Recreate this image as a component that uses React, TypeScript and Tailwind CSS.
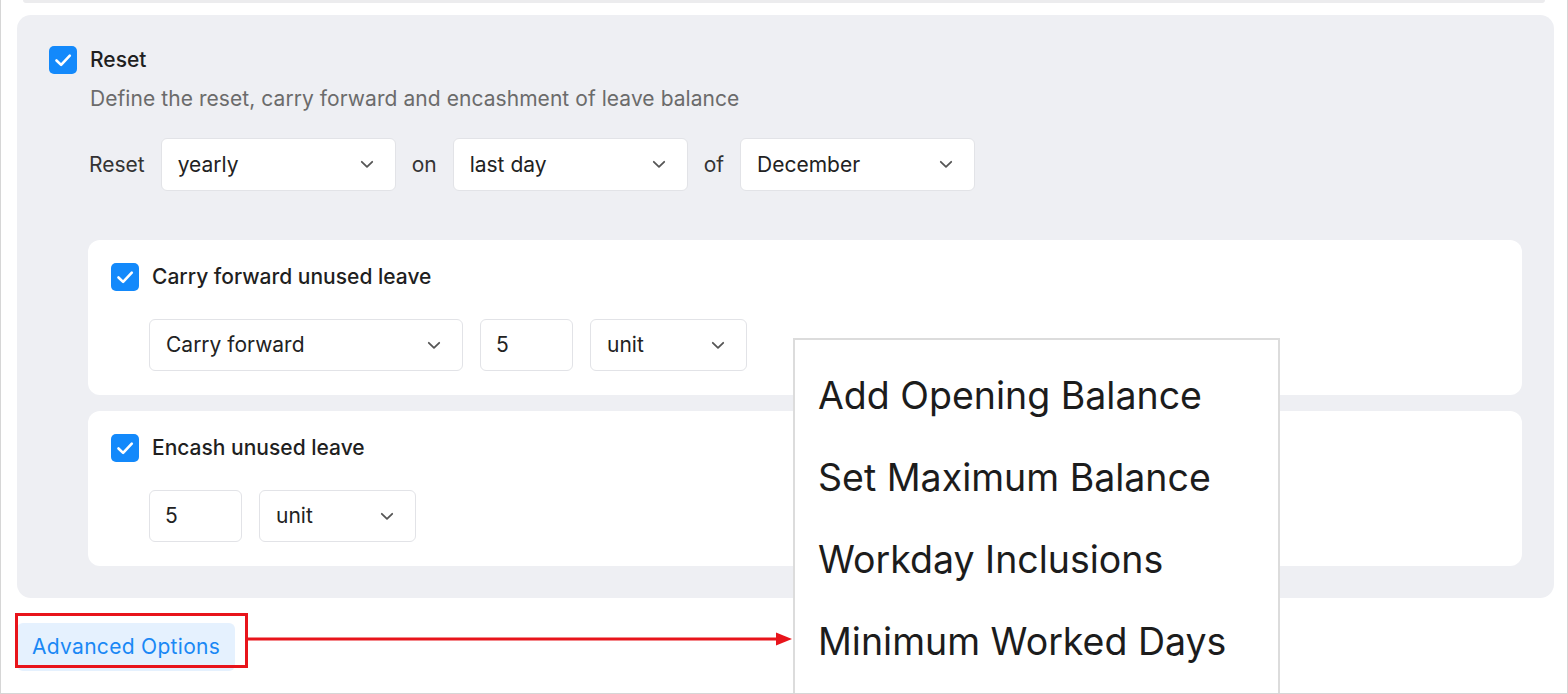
import React from 'react';

const font = { fontFamily: 'Inter, "Noto Sans", sans-serif' };

const Check = () => (
  <span className="flex h-[28px] w-[28px] shrink-0 items-center justify-center rounded-[5px] bg-[#1389fb]">
    <svg width="28" height="28" viewBox="0 0 28 28" fill="none">
      <path
        d="M7.5 14.5l4.6 4.4L20.8 9.6"
        stroke="white"
        strokeWidth="2.6"
        strokeLinecap="round"
        strokeLinejoin="round"
      />
    </svg>
  </span>
);

const Chevron = () => (
  <svg width="14" height="9" viewBox="0 0 14 9" fill="none">
    <path
      d="M1.8 1.8L7 6.8l5.2-5"
      stroke="#555"
      strokeWidth="1.8"
      strokeLinecap="round"
      strokeLinejoin="round"
    />
  </svg>
);

const Select = ({ value, width, height = 'h-[53px]' }: { value: string; width: string; height?: string }) => (
  <div
    className={`flex ${height} ${width} items-center justify-between rounded-[6px] border border-[#e2e3e7] bg-white pl-[16px] pr-[21px] text-[21px] text-[#222]`}
  >
    <span>{value}</span>
    <Chevron />
  </div>
);

const NumberBox = ({ value, width }: { value: string; width: string }) => (
  <div
    className={`flex h-[52px] ${width} items-center rounded-[6px] border border-[#e2e3e7] bg-white pl-[15px] text-[21px] text-[#222]`}
  >
    {value}
  </div>
);

const menuItems = [
  'Add Opening Balance',
  'Set Maximum Balance',
  'Workday Inclusions',
  'Minimum Worked Days',
];

export default function App() {
  return (
    <div
      style={font}
      className="relative h-[694px] w-[1568px] overflow-hidden border-x border-b border-[#d6d6d6] bg-white leading-[28px]"
    >
      <div className="mx-[22px] h-[3px] rounded-b-full bg-[#ececee]" />

      <div className="ml-[16px] mr-[13px] mt-[12px] rounded-[14px] bg-[#eeeff3] px-[32px] pb-[32px] pt-[31px]">
        <div className="flex items-center gap-[13px]">
          <Check />
          <span className="text-[21px] font-medium text-[#1f1f1f]">Reset</span>
        </div>
        <p className="ml-[41px] mt-[11px] text-[21px] tracking-[0.06px] text-[#6b6b6b]">
          Define the reset, carry forward and encashment of leave balance
        </p>

        <div className="ml-[40px] mt-[25px] flex items-center gap-[16px] text-[21px] text-[#333]">
          <span>Reset</span>
          <Select value="yearly" width="w-[235px]" />
          <span>on</span>
          <Select value="last day" width="w-[235px]" />
          <span>of</span>
          <Select value="December" width="w-[235px]" />
        </div>

        <div className="ml-[39px] mt-[49px] flex flex-col gap-[16px]">
          <div className="rounded-[12px] bg-white pb-[24px] pl-[23px] pt-[23px]">
            <div className="flex items-center gap-[13px]">
              <Check />
              <span className="text-[21px] font-medium text-[#1f1f1f]">
                Carry forward unused leave
              </span>
            </div>
            <div className="ml-[38px] mt-[28px] flex items-center gap-[17px]">
              <Select value="Carry forward" width="w-[314px]" height="h-[52px]" />
              <NumberBox value="5" width="w-[93px]" />
              <Select value="unit" width="w-[157px]" height="h-[52px]" />
            </div>
          </div>

          <div className="rounded-[12px] bg-white pb-[24px] pl-[23px] pt-[23px]">
            <div className="flex items-center gap-[13px]">
              <Check />
              <span className="text-[21px] font-medium text-[#1f1f1f]">
                Encash unused leave
              </span>
            </div>
            <div className="ml-[38px] mt-[28px] flex items-center gap-[17px]">
              <NumberBox value="5" width="w-[93px]" />
              <Select value="unit" width="w-[157px]" height="h-[52px]" />
            </div>
          </div>
        </div>
      </div>

      <div className="ml-[16px] mt-[25px] inline-flex h-[48px] items-center rounded-[6px] bg-[#e5f1fe] px-[15px] text-[21px] tracking-[0.3px] text-[#1a88f5]">
        Advanced Options
      </div>

      {/* annotation */}
      <div className="absolute left-[14px] top-[613px] h-[55px] w-[233px] border-[3px] border-[#e8141b]" />
      <svg
        className="absolute left-[246px] top-[630px]"
        width="548"
        height="18"
        viewBox="0 0 548 18"
      >
        <line x1="0" y1="9" x2="536" y2="9" stroke="#e8141b" strokeWidth="3" />
        <path d="M529 2.5L545 9l-16 6.5z" fill="#e8141b" />
      </svg>

      <div className="absolute left-[792px] top-[338px] h-[380px] w-[487px] border-2 border-[#dcdcdc] bg-white pl-[23px] pt-[35px]">
        {menuItems.map((item) => (
          <div key={item} className="h-[82px] text-[37.5px] leading-[42px] text-[#1c1c1c]">
            {item}
          </div>
        ))}
      </div>
    </div>
  );
}
